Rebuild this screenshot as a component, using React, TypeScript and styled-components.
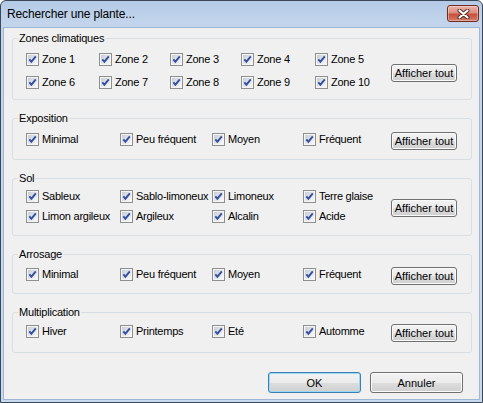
import React from 'react'
import styled, { createGlobalStyle } from 'styled-components'

type GroupData = {
  title: string
  cols: string
  rowGap: number
  pad: string
  items: string[]
}

const FREQ = ['Minimal', 'Peu fréquent', 'Moyen', 'Fréquent']
const WIDE = '94px 92px 91px 88px'

const groups: GroupData[] = [
  {
    title: 'Zones climatiques',
    cols: '73px 71px 71px 74px 76px',
    rowGap: 3,
    pad: '4px 0 7px',
    items: ['Zone 1', 'Zone 2', 'Zone 3', 'Zone 4', 'Zone 5', 'Zone 6', 'Zone 7', 'Zone 8', 'Zone 9', 'Zone 10'],
  },
  { title: 'Exposition', cols: WIDE, rowGap: 0, pad: '4px 0 10px', items: FREQ },
  {
    title: 'Sol',
    cols: WIDE,
    rowGap: 0,
    pad: '1px 0 9px',
    items: ['Sableux', 'Sablo-limoneux', 'Limoneux', 'Terre glaise', 'Limon argileux', 'Argileux', 'Alcalin', 'Acide'],
  },
  { title: 'Arrosage', cols: WIDE, rowGap: 0, pad: '3px 0 9px', items: FREQ },
  { title: 'Multiplication', cols: WIDE, rowGap: 0, pad: '2px 0 11px', items: ['Hiver', 'Printemps', 'Eté', 'Automme'] },
]

const GlobalStyle = createGlobalStyle`
  html, body {
    margin: 0;
    padding: 0;
    background: #ffffff;
  }
  body {
    font-family: "Liberation Sans", Arial, sans-serif;
    font-size: 11px;
    color: #000;
  }
`

const Window = styled.div`
  box-sizing: border-box;
  width: 483px;
  height: 403px;
  display: flex;
  flex-direction: column;
  padding: 0 3px 3px;
  border: 1px solid #3b4756;
  border-radius: 6px 6px 0 0;
  background: linear-gradient(180deg, #b3cae6 0px, #c2d5ec 22px, #c8daef 100%);
`

const TitleBar = styled.div`
  height: 27px;
  display: flex;
  align-items: flex-start;
  justify-content: space-between;
`

const TitleText = styled.span`
  padding-left: 3px;
  line-height: 27px;
  font-size: 12px;
  letter-spacing: -0.15px;
  color: #000;
`

const CloseButton = styled.div`
  box-sizing: border-box;
  margin-top: 4px;
  width: 32px;
  height: 17px;
  display: flex;
  align-items: center;
  justify-content: center;
  border: 1px solid #6e2a21;
  border-radius: 3px;
  background: linear-gradient(180deg, #ebb3a9 0%, #dc8c7e 45%, #c6503c 55%, #d57b69 100%);
  box-shadow: inset 0 0 0 1px rgba(255, 255, 255, 0.35);
`

const Client = styled.div`
  flex: 1;
  display: flex;
  flex-direction: column;
  gap: 12px;
  padding: 4px 7px 0 8px;
  background: #f0f0f0;
  box-shadow: 0 0 0 1px #9fb7d4;
`

const Group = styled.fieldset<{ $pad: string }>`
  margin: 0;
  min-width: 0;
  padding: ${(p) => p.$pad};
  border: 1px solid #d5dfe5;
  border-radius: 3px;
`

const Legend = styled.legend`
  margin-left: 5px;
  padding: 0 1px;
  line-height: 13px;
  letter-spacing: -0.2px;
`

const GroupBody = styled.div`
  display: flex;
  align-items: center;
  padding-left: 13px;
`

const ChecksGrid = styled.div<{ $cols: string; $gap: number }>`
  display: grid;
  grid-template-columns: ${(p) => p.$cols};
  grid-auto-rows: 20px;
  row-gap: ${(p) => p.$gap}px;
`

const CheckRow = styled.label`
  display: flex;
  align-items: center;
  gap: 3px;
  white-space: nowrap;
  letter-spacing: -0.25px;

  svg {
    flex: none;
  }
`

const PushButton = styled.button<{ $default?: boolean }>`
  box-sizing: border-box;
  padding: 0;
  font-family: "Liberation Sans", Arial, sans-serif;
  font-size: 11px;
  color: #000;
  border: 1px solid ${(p) => (p.$default ? '#3c7fb1' : '#707070')};
  border-radius: 3px;
  background: linear-gradient(180deg, #f2f2f2 0%, #ebebeb 50%, #dddddd 51%, #cfcfcf 100%);
  box-shadow: inset 0 0 0 1px ${(p) => (p.$default ? '#9ad8f4' : '#fbfbfb')};
`

const ShowAllButton = styled(PushButton)`
  width: 66px;
  height: 18px;
  margin: 2px 0 -2px;
`

const Footer = styled.div`
  margin-top: 7px;
  display: flex;
  justify-content: flex-end;
  gap: 9px;
  padding-right: 9px;
`

const DialogButton = styled(PushButton)`
  width: 93px;
  height: 21px;
`

const CheckBox = () => (
  <svg width="13" height="13" viewBox="0 0 13 13">
    <defs>
      <linearGradient id="cbFill" x1="0" y1="0" x2="1" y2="1">
        <stop offset="0" stopColor="#c9ced5" />
        <stop offset="1" stopColor="#f8f8f8" />
      </linearGradient>
    </defs>
    <rect x="0.5" y="0.5" width="12" height="12" fill="#f5f5f5" stroke="#8e8f8f" />
    <rect x="2" y="2" width="9" height="9" fill="url(#cbFill)" />
    <path d="M3.3 6.3 L5.4 8.7 L9.8 3.3" fill="none" stroke="#3350a3" strokeWidth="1.9" />
  </svg>
)

const CloseGlyph = () => (
  <svg width="13" height="10" viewBox="0 0 13 10">
    <path d="M2.5 1.5 L10.5 8.5 M10.5 1.5 L2.5 8.5" stroke="#4a2520" strokeWidth="4" strokeLinecap="round" />
    <path d="M2.5 1.5 L10.5 8.5 M10.5 1.5 L2.5 8.5" stroke="#ffffff" strokeWidth="2.2" strokeLinecap="round" />
  </svg>
)

const App: React.FC = () => (
  <>
    <GlobalStyle />
    <Window>
      <TitleBar>
        <TitleText>Rechercher une plante...</TitleText>
        <CloseButton>
          <CloseGlyph />
        </CloseButton>
      </TitleBar>
      <Client>
        {groups.map((g) => (
          <Group key={g.title} $pad={g.pad}>
            <Legend>{g.title}</Legend>
            <GroupBody>
              <ChecksGrid $cols={g.cols} $gap={g.rowGap}>
                {g.items.map((item) => (
                  <CheckRow key={item}>
                    <CheckBox />
                    {item}
                  </CheckRow>
                ))}
              </ChecksGrid>
              <ShowAllButton>Afficher tout</ShowAllButton>
            </GroupBody>
          </Group>
        ))}
        <Footer>
          <DialogButton $default>OK</DialogButton>
          <DialogButton>Annuler</DialogButton>
        </Footer>
      </Client>
    </Window>
  </>
)

export default App
